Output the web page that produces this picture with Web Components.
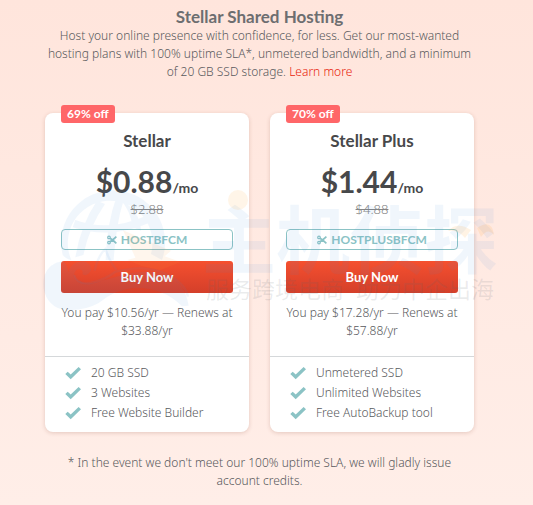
<!DOCTYPE html>
<html lang="en">
<head>
<meta charset="utf-8">
<title>Stellar Shared Hosting</title>
<style>
body { margin: 0; min-height: 100vh; background: linear-gradient(#ffe5dc, #ffeee8); font-family: "Noto Sans", "Noto Sans CJK SC", sans-serif; font-weight: 300; font-size: 12px; line-height: 18px; color: #58595c; }
</style>
</head>
<body>
<hosting-page></hosting-page>
<script>
function define(name, html) {
  const template = document.createElement('template');
  template.innerHTML = html;
  customElements.define(name, class extends HTMLElement {
    constructor() {
      super();
      this.attachShadow({ mode: 'open' }).append(template.content.cloneNode(true));
    }
  });
}

define('percent-badge', `
<style>
:host { display: block; padding: 0 6px; border-radius: 3px; background: #ff6668; color: #fff; font: 700 12px/18px Lato, sans-serif; }
</style><slot></slot>`);

define('coupon-code', `
<style>
:host { display: flex; box-sizing: border-box; height: 21px; align-items: center; justify-content: center; gap: 4px; border: 1px solid #8bc3c5; border-radius: 4px; color: #8bc3c5; font: 700 12px/18px Lato, sans-serif; }
svg { width: 10px; height: 10px; }
</style>
<svg viewBox="0 0 10 10" fill="none" stroke="currentColor" stroke-width="1.2" aria-hidden="true"><circle cx="2" cy="2.4" r="1.3"/><circle cx="2" cy="7.6" r="1.3"/><path d="M3 3.2 5.6 5 9.4 8.3M3 6.8 5.6 5 9.4 1.7" stroke-width="1.7"/></svg>
<slot></slot>`);

define('feature-item', `
<style>
:host { display: flex; align-items: center; gap: 10px; padding-left: 4px; line-height: 20px; }
svg { width: 16px; height: 14px; }
</style>
<svg viewBox="0 0 16 14" aria-hidden="true"><path d="M.3 8 2.7 5.8 5.7 8.6 13.6 1 16 3.3 5.7 13.2Z" fill="#8bc3c5"/></svg>
<slot></slot>`);

define('plan-card', `
<style>
:host { display: block; position: relative; border-radius: 8px; background: #fff; box-shadow: 0 1px 4px rgba(120, 50, 30, .2); text-align: center; }
percent-badge { position: absolute; top: -8px; left: 16px; }
.offer { padding: 16px; }
h3 { margin: 0; font: 700 17px/24px Lato, sans-serif; color: #47484a; }
.price { margin: 8px 0 0; font: 700 30px/40px Lato, sans-serif; color: #47484a; }
.price small { font-size: 14px; line-height: 14px; }
del { display: block; font-size: 13px; line-height: 16px; color: #858585; }
coupon-code { margin-top: 12px; }
button { display: block; width: 100%; height: 32px; margin-top: 11px; padding: 0; border: 0; border-radius: 3px; background: linear-gradient(#f5502f, #d43f2a); color: #fff; font: 700 13px/18px Lato, sans-serif; }
.terms { margin: 11px 0 0; }
.features { padding: 6px 16px 9px; border-top: 1px solid #d5d8da; text-align: left; }
</style>
<percent-badge><slot name="discount"></slot></percent-badge>
<div class="offer">
<h3><slot name="name"></slot></h3>
<p class="price"><slot name="price"></slot><small>/mo</small></p>
<del><slot name="old"></slot></del>
<coupon-code><slot name="code"></slot></coupon-code>
<button type="button">Buy Now</button>
<p class="terms"><slot name="terms"></slot></p>
</div>
<div class="features"><slot></slot></div>`);

define('brand-watermark', `
<style>
:host { display: block; pointer-events: none; color: rgba(70, 140, 220, .08); text-align: left; }
.mark { display: flex; align-items: flex-start; }
.logo { flex: none; width: 170px; height: 140px; }
.words { position: relative; }
.accent { position: absolute; top: 0; left: 0; width: 294px; height: 70px; }
.big { margin: 18px 0 0 -4px; font: 700 74px/76px "Noto Sans CJK SC", sans-serif; white-space: nowrap; }
.small { display: flex; gap: 12px; font: 400 23px/28px "Noto Sans CJK SC", sans-serif; color: rgba(90, 100, 110, .13); white-space: nowrap; }
</style>
<div class="mark">
<svg class="logo" viewBox="0 0 510 420" aria-hidden="true" fill="none">
<path d="M80 225A156 156 0 1 1 378 240L345 222A127 127 0 1 0 106 240Q92 238 80 225ZM183 62 207 72Q160 140 142 225L118 232Q134 134 183 62ZM240 55 262 64Q240 135 233 240L209 240Q212 135 240 55ZM252 58Q312 92 315 152L290 142Q283 90 252 58ZM118 120Q220 158 338 104L346 126Q225 180 110 142ZM78 244Q40 250 26 285C12 330 35 378 78 388Q140 396 188 369Q235 329 296 323Q384 322 438 379L458 377Q447 313 398 286Q333 264 257 286Q195 304 165 310Q123 312 115 286Q114 270 130 268Q143 270 139 282Q152 293 166 270Q165 246 138 244Q105 246 97 276Q92 246 78 244Z" fill="currentColor"/>
<path d="M115 285Q123 315 164 309Q210 298 237 276Q330 250 400 286Q450 315 456 350M176 272Q186 227 208 207Q222 247 242 270" stroke="currentColor" stroke-width="7"/>
<path d="M261 151 405 212 386 229 434 246 372 271 315 257 274 240 298 233Z" fill="rgba(255,150,50,.09)"/>
</svg>
<div class="words">
<svg class="accent" viewBox="0 0 294 70" aria-hidden="true"><circle cx="32" cy="20" r="10" fill="rgba(255,165,50,.11)"/><path d="M242 51Q251 41 265 50L259 58Q252 49 242 51ZM271 48Q286 38 288 55Q282 47 275 57Z" fill="rgba(255,165,50,.13)"/></svg>
<div class="big">主机侦探</div><div class="small"><span>服务跨境电商</span><span>助力中企出海</span></div>
</div>
</div>`);

define('hosting-page', `
<style>
:host { display: block; position: relative; padding: 7px 59px 14px 45px; text-align: center; }
h2 { margin: 0; font: 700 17px/20px Lato, sans-serif; color: #6d6e70; }
p { margin: 0 -8px; }
a { color: #e8230c; text-decoration: none; }
.plans { display: grid; grid-template-columns: 1fr 1fr; gap: 21px; margin: 32px 0 22px; }
brand-watermark { position: absolute; top: 180px; left: 36px; }
</style>
<h2>Stellar Shared Hosting</h2>
<p>Host your online presence with confidence, for less. Get our most-wanted<br>hosting plans with 100% uptime SLA*, unmetered bandwidth, and a minimum<br>of 20 GB SSD storage. <a href="#more">Learn more</a></p>
<div class="plans">
<plan-card><span slot="discount">69% off</span><span slot="name">Stellar</span><span slot="price">$0.88</span><span slot="old">$2.88</span><span slot="code">HOSTBFCM</span><span slot="terms">You pay $10.56/yr — Renews at<br>$33.88/yr</span>
<feature-item>20 GB SSD</feature-item><feature-item>3 Websites</feature-item><feature-item>Free Website Builder</feature-item></plan-card>
<plan-card><span slot="discount">70% off</span><span slot="name">Stellar Plus</span><span slot="price">$1.44</span><span slot="old">$4.88</span><span slot="code">HOSTPLUSBFCM</span><span slot="terms">You pay $17.28/yr — Renews at<br>$57.88/yr</span>
<feature-item>Unmetered SSD</feature-item><feature-item>Unlimited Websites</feature-item><feature-item>Free AutoBackup tool</feature-item></plan-card>
</div>
<p>* In the event we don't meet our 100% uptime SLA, we will gladly issue<br>account credits.</p>
<brand-watermark></brand-watermark>`);
</script>
</body>
</html>
